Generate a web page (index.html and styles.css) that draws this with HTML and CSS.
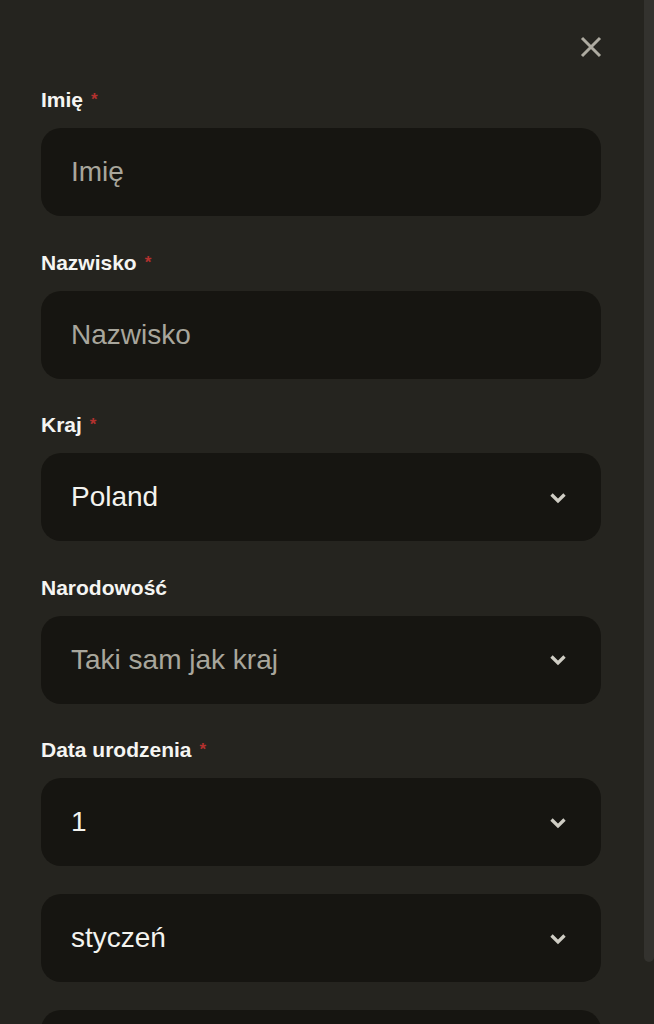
FILE: index.html
```html
<!DOCTYPE html>
<html lang="pl">
<head>
<meta charset="utf-8">
<title>Formularz</title>
<link rel="stylesheet" href="styles.css">
</head>
<body>
<div class="panel">
  <div class="header">
    <button class="close" aria-label="Zamknij">
      <svg width="22" height="22" viewBox="0 0 22 22"><path d="M2 2 L20 20 M20 2 L2 20" stroke="#aeaba1" stroke-width="3" fill="none" stroke-linecap="butt"/></svg>
    </button>
  </div>
  <form class="form">
    <div class="field">
      <div class="label">Imię<span class="req">*</span></div>
      <input class="control" type="text" placeholder="Imię">
    </div>
    <div class="field">
      <div class="label">Nazwisko<span class="req">*</span></div>
      <input class="control" type="text" placeholder="Nazwisko">
    </div>
    <div class="field">
      <div class="label">Kraj<span class="req">*</span></div>
      <div class="control select"><span class="value">Poland</span><svg class="chev" width="16" height="12" viewBox="0 0 16 12"><polyline points="1.5,2.5 8,9 14.5,2.5" fill="none" stroke="#cfcdc4" stroke-width="3.3"/></svg></div>
    </div>
    <div class="field">
      <div class="label">Narodowość</div>
      <div class="control select"><span class="placeholder">Taki sam jak kraj</span><svg class="chev" width="16" height="12" viewBox="0 0 16 12"><polyline points="1.5,2.5 8,9 14.5,2.5" fill="none" stroke="#cfcdc4" stroke-width="3.3"/></svg></div>
    </div>
    <div class="field">
      <div class="label">Data urodzenia<span class="req">*</span></div>
      <div class="stack">
        <div class="control select"><span class="value">1</span><svg class="chev" width="16" height="12" viewBox="0 0 16 12"><polyline points="1.5,2.5 8,9 14.5,2.5" fill="none" stroke="#cfcdc4" stroke-width="3.3"/></svg></div>
        <div class="control select"><span class="value">styczeń</span><svg class="chev" width="16" height="12" viewBox="0 0 16 12"><polyline points="1.5,2.5 8,9 14.5,2.5" fill="none" stroke="#cfcdc4" stroke-width="3.3"/></svg></div>
        <div class="control select"></div>
      </div>
    </div>
  </form>
</div>
<div class="scrollbar"><div class="thumb"></div></div>
</body>
</html>
```
FILE: styles.css
```css
html, body {
  margin: 0;
  padding: 0;
  height: 100%;
  overflow: hidden;
}
body {
  background: #25241f;
  font-family: "Liberation Sans", Arial, sans-serif;
  color: #f3f3ef;
}
.panel {
  width: 560px;
  padding: 36px 43px 0 41px;
}
.header {
  display: flex;
  justify-content: flex-end;
  height: 22px;
  margin-bottom: 30px;
}
.close {
  background: none;
  border: 0;
  padding: 0;
  width: 22px;
  height: 22px;
  margin-right: -1px;
  cursor: pointer;
  display: block;
}
.close svg { display: block; }
.form {
  display: flex;
  flex-direction: column;
  gap: 34.5px;
  margin: 0;
}
.field {
  display: flex;
  flex-direction: column;
}
.label {
  font-size: 21px;
  font-weight: bold;
  line-height: 24px;
  height: 24px;
  margin-bottom: 16px;
  color: #f5f5f2;
  display: flex;
  align-items: flex-start;
}
.req {
  color: #b3312e;
  font-size: 17px;
  font-weight: bold;
  line-height: 17px;
  margin-left: 8px;
  margin-top: 3px;
}
.stack {
  display: flex;
  flex-direction: column;
  gap: 28px;
}
.control {
  box-sizing: border-box;
  width: 560px;
  height: 88px;
  border: 0;
  border-radius: 20px;
  background: #161511;
  padding: 0 35px 0 30px;
  font-family: "Liberation Sans", Arial, sans-serif;
  font-size: 28px;
  color: #f3f3ef;
  outline: none;
  margin: 0;
}
.control::placeholder {
  color: #a8a69c;
  opacity: 1;
}
.select {
  display: flex;
  align-items: center;
  justify-content: space-between;
}
.placeholder { color: #a8a69c; }
.chev { display: block; margin-top: 1px; }
.scrollbar {
  position: fixed;
  top: 0;
  right: 0;
  width: 10px;
  height: 100%;
}
.thumb {
  width: 10px;
  height: 962px;
  background: #33322e;
  border-radius: 0 0 5px 5px;
}
```
